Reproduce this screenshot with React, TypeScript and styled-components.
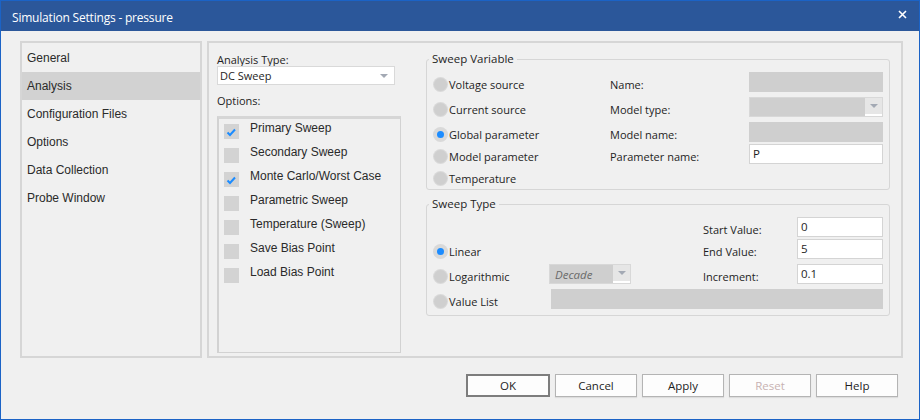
import React from "react";
import styled, { createGlobalStyle } from "styled-components";

const GlobalStyle = createGlobalStyle`
	html, body {
		margin: 0;
		padding: 0;
		background: #f0f0f0;
	}
	* {
		box-sizing: border-box;
	}
`;

const UI_FONT = `"Open Sans", "Noto Sans", sans-serif`;
const LIST_FONT = `"Liberation Sans", Arial, sans-serif`;

const Window = styled.div`
	width: 920px;
	height: 420px;
	border: 1px solid #1b63c6;
	background: #f0f0f0;
	display: flex;
	flex-direction: column;
	font-family: ${UI_FONT};
	font-size: 11px;
	color: #1e1e1e;
`;

const TitleBar = styled.div`
	height: 30px;
	flex-shrink: 0;
	background: #2b579a;
	display: flex;
	align-items: center;
	justify-content: space-between;
	padding: 2px 11px 0 11px;
	color: #ffffff;
`;

const Title = styled.span`
	font-size: 12px;
	letter-spacing: -0.2px;
`;

const CloseButton = styled.button`
	background: none;
	border: none;
	padding: 0;
	width: 12px;
	height: 12px;
	display: flex;
	align-items: center;
	justify-content: center;
	margin-top: -6px;
	cursor: pointer;
`;

const Body = styled.div`
	display: flex;
	gap: 5px;
	padding: 10px 0 0 19px;
`;

const NavPanel = styled.ul`
	width: 182px;
	height: 317px;
	margin: 0;
	padding: 1px 0 0;
	list-style: none;
	border: 2px solid #d6d6d6;
	font-family: ${LIST_FONT};
	font-size: 12px;
	color: #2a2a2a;
`;

const NavItem = styled.li<{ $active?: boolean }>`
	height: 28px;
	display: flex;
	align-items: center;
	padding-left: 5px;
	background: ${(p) => (p.$active ? "#d2d2d2" : "transparent")};
`;

const ContentPanel = styled.div`
	width: 696px;
	height: 317px;
	border: 2px solid #d6d6d6;
	display: flex;
	padding: 0 11px 0 8px;
`;

const LeftColumn = styled.div`
	width: 184px;
	margin-right: 25px;
	display: flex;
	flex-direction: column;
`;

const FieldLabel = styled.div`
	line-height: 13px;
	margin-top: 10px;
`;

const OptionsLabel = styled.div`
	line-height: 14px;
	margin-top: 9px;
`;

const Combo = styled.div<{ $disabled?: boolean; $width?: number }>`
	width: ${(p) => (p.$width ? `${p.$width}px` : "100%")};
	height: ${(p) => (p.$disabled ? 20 : 19)}px;
	border: 1px solid ${(p) => (p.$disabled ? "#d8d8d8" : "#d9d9d9")};
	background: ${(p) => (p.$disabled ? "#cfcfcf" : "#ffffff")};
	display: flex;
	align-items: center;
`;

const ComboText = styled.span<{ $italic?: boolean }>`
	flex: 1;
	padding-left: ${(p) => (p.$italic ? 5 : 2)}px;
	font-size: ${(p) => (p.$italic ? 11.5 : 11)}px;
	font-style: ${(p) => (p.$italic ? "italic" : "normal")};
	color: ${(p) => (p.$italic ? "#6a6a6a" : "#1e1e1e")};
`;

const ComboButton = styled.span<{ $boxed?: boolean }>`
	width: 17px;
	align-self: stretch;
	display: flex;
	align-items: center;
	justify-content: center;
	background: ${(p) => (p.$boxed ? "#e6e6e6" : "transparent")};
	border-bottom: ${(p) => (p.$boxed ? "2px solid #ffffff" : "none")};
	margin-right: ${(p) => (p.$boxed ? 0 : 2)}px;
`;

const Arrow = styled.span`
	width: 0;
	height: 0;
	border-left: 4px solid transparent;
	border-right: 4px solid transparent;
	border-top: 4px solid #a3a9b4;
`;

const OptionsBox = styled.div`
	margin-top: 8px;
	height: 237px;
	border: 1px solid #d2d2d2;
	border-top: 3px solid #d6d6d6;
	border-left-width: 2px;
	padding: 0 0 0 5px;
	font-family: ${LIST_FONT};
	font-size: 12px;
	color: #2a2a2a;
`;

const OptionRow = styled.div`
	height: 24px;
	display: flex;
	align-items: flex-start;
	gap: 11px;
`;

const CheckBox = styled.span`
	width: 15px;
	height: 15px;
	margin-top: 5px;
	background: #d3d3d3;
	display: flex;
`;

const OptionText = styled.span`
	line-height: 15px;
	padding-top: 2px;
`;

const RightColumn = styled.div`
	flex: 1;
	display: flex;
	flex-direction: column;
`;

const Group = styled.fieldset<{ $top: number }>`
	margin: ${(p) => p.$top}px 0 0;
	padding: 6px 6px 0 7px;
	border: 1px solid #d6d6d6;
	border-radius: 3px;
	min-width: 0;
`;

const Legend = styled.legend`
	padding: 0 3px;
	margin-left: -5px;
	line-height: 14px;
	font-size: 11.5px;
`;

const VariableGrid = styled.div`
	display: grid;
	grid-template-columns: 176px 139px 134px;
	grid-template-rows: 25px 25px 22px 22px 22px;
	padding-bottom: 1px;
`;

const TypeGrid = styled.div`
	display: grid;
	grid-template-columns: 115px 154px 94px 86px;
	grid-template-rows: 22px 25px 25px 22px;
	padding-bottom: 4px;
`;

const Cell = styled.div<{ $col?: number; $row?: number; $span?: string }>`
	grid-column: ${(p) => p.$span ?? p.$col ?? "auto"};
	grid-row: ${(p) => p.$row ?? "auto"};
	align-self: start;
	height: 24px;
	display: flex;
	align-items: center;
	white-space: nowrap;
`;

const InputCell = styled.div<{ $col?: number; $row?: number; $span?: string; $offset?: number }>`
	grid-column: ${(p) => p.$span ?? p.$col ?? "auto"};
	grid-row: ${(p) => p.$row ?? "auto"};
	align-self: start;
	margin-left: ${(p) => p.$offset ?? 0}px;
`;

const RadioDot = styled.span<{ $checked?: boolean }>`
	width: 13px;
	height: 13px;
	border-radius: 50%;
	background: ${(p) => (p.$checked ? "#d9d9d9" : "#cfcfcf")};
	box-shadow: 0 0 0 1px #d9d9d9;
	margin-right: 2px;
	display: flex;
	align-items: center;
	justify-content: center;

	&::after {
		content: "";
		width: 7px;
		height: 7px;
		border-radius: 50%;
		background: ${(p) => (p.$checked ? "#1c8cff" : "transparent")};
	}
`;

const TextBox = styled.div<{ $disabled?: boolean }>`
	height: 20px;
	border: 1px solid ${(p) => (p.$disabled ? "#cfcfcf" : "#d4d4d4")};
	background: ${(p) => (p.$disabled ? "#cfcfcf" : "#ffffff")};
	padding-left: 3px;
	line-height: 18px;
	font-size: 11.5px;
`;

const Footer = styled.div`
	display: flex;
	justify-content: flex-end;
	gap: 5px;
	padding: 16px 21px 0 0;
`;

const Button = styled.button<{ $primary?: boolean }>`
	width: ${(p) => (p.$primary ? 84 : 82)}px;
	height: 23px;
	padding: 0;
	background: #fdfdfd;
	border: ${(p) => (p.$primary ? "2px solid #7d7d7d" : "1px solid #b4b4b4")};
	box-shadow: ${(p) => (p.$primary ? "none" : "0 1px 1px rgba(0, 0, 0, 0.08)")};
	font-family: ${UI_FONT};
	font-size: 11.5px;
	color: ${(p) => (p.disabled ? "#c8b2b2" : "#1e1e1e")};
`;

const options = [
	{ label: "Primary Sweep", checked: true },
	{ label: "Secondary Sweep", checked: false },
	{ label: "Monte Carlo/Worst Case", checked: true },
	{ label: "Parametric Sweep", checked: false },
	{ label: "Temperature (Sweep)", checked: false },
	{ label: "Save Bias Point", checked: false },
	{ label: "Load Bias Point", checked: false },
];

const navItems = ["General", "Analysis", "Configuration Files", "Options", "Data Collection", "Probe Window"];

const Radio: React.FC<{ label: string; checked?: boolean; row: number }> = ({ label, checked, row }) => (
	<Cell $col={1} $row={row}>
		<RadioDot $checked={checked} />
		{label}
	</Cell>
);

const App: React.FC = () => {
	return (
		<>
			<GlobalStyle />
			<Window>
				<TitleBar>
					<Title>Simulation Settings - pressure</Title>
					<CloseButton aria-label="Close">
						<svg width="9" height="9" viewBox="0 0 9 9">
							<path d="M1 1 L8 8 M8 1 L1 8" stroke="#ffffff" strokeWidth="1.6" />
						</svg>
					</CloseButton>
				</TitleBar>
				<Body>
					<NavPanel>
						{navItems.map((item) => (
							<NavItem key={item} $active={item === "Analysis"}>
								{item}
							</NavItem>
						))}
					</NavPanel>
					<ContentPanel>
						<LeftColumn>
							<FieldLabel>Analysis Type:</FieldLabel>
							<Combo $width={178}>
								<ComboText>DC Sweep</ComboText>
								<ComboButton>
									<Arrow />
								</ComboButton>
							</Combo>
							<OptionsLabel>Options:</OptionsLabel>
							<OptionsBox>
								{options.map((o) => (
									<OptionRow key={o.label}>
										<CheckBox>
											{o.checked && (
												<svg width="15" height="15" viewBox="0 0 15 15">
													<path d="M3.5 8.5 L6 11 L11 5.5" fill="none" stroke="#1c8cff" strokeWidth="2" />
												</svg>
											)}
										</CheckBox>
										<OptionText>{o.label}</OptionText>
									</OptionRow>
								))}
							</OptionsBox>
						</LeftColumn>
						<RightColumn>
							<Group $top={9}>
								<Legend>Sweep Variable</Legend>
								<VariableGrid>
									<Radio label="Voltage source" row={1} />
									<Radio label="Current source" row={2} />
									<Radio label="Global parameter" row={3} checked />
									<Radio label="Model parameter" row={4} />
									<Radio label="Temperature" row={5} />
									<Cell $col={2} $row={1}>Name:</Cell>
									<Cell $col={2} $row={2}>Model type:</Cell>
									<Cell $col={2} $row={3}>Model name:</Cell>
									<Cell $col={2} $row={4}>Parameter name:</Cell>
									<InputCell $col={3} $row={1}>
										<TextBox $disabled />
									</InputCell>
									<InputCell $col={3} $row={2}>
										<Combo $disabled>
											<ComboText />
											<ComboButton $boxed>
												<Arrow />
											</ComboButton>
										</Combo>
									</InputCell>
									<InputCell $col={3} $row={3}>
										<TextBox $disabled />
									</InputCell>
									<InputCell $col={3} $row={4}>
										<TextBox>P</TextBox>
									</InputCell>
								</VariableGrid>
							</Group>
							<Group $top={7}>
								<Legend>Sweep Type</Legend>
								<TypeGrid>
									<Radio label="Linear" row={2} checked />
									<Radio label="Logarithmic" row={3} />
									<Radio label="Value List" row={4} />
									<InputCell $col={2} $row={3}>
										<Combo $disabled $width={82}>
											<ComboText $italic>Decade</ComboText>
											<ComboButton $boxed>
												<Arrow />
											</ComboButton>
										</Combo>
									</InputCell>
									<InputCell $span="2 / 5" $row={4} $offset={2}>
										<TextBox $disabled />
									</InputCell>
									<Cell $col={3} $row={1}>Start Value:</Cell>
									<Cell $col={3} $row={2}>End Value:</Cell>
									<Cell $col={3} $row={3}>Increment:</Cell>
									<InputCell $col={4} $row={1}>
										<TextBox>0</TextBox>
									</InputCell>
									<InputCell $col={4} $row={2}>
										<TextBox>5</TextBox>
									</InputCell>
									<InputCell $col={4} $row={3}>
										<TextBox>0.1</TextBox>
									</InputCell>
								</TypeGrid>
							</Group>
						</RightColumn>
					</ContentPanel>
				</Body>
				<Footer>
					<Button $primary>OK</Button>
					<Button>Cancel</Button>
					<Button>Apply</Button>
					<Button disabled>Reset</Button>
					<Button>Help</Button>
				</Footer>
			</Window>
		</>
	);
};

export default App;
